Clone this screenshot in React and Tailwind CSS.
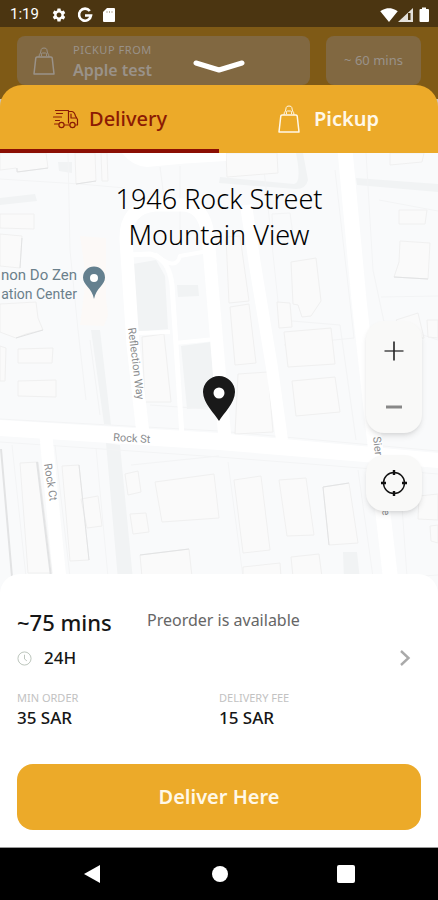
import { useState } from 'react';
import { MdSettings, MdSignalWifi4Bar } from 'react-icons/md';

const BUILDINGS = [
  '0,153 46,153 48,168 18,172 16,168 0,170',
  '75,153 95,153 96,181 76,184',
  '101,153 107,153 108,181 102,181',
  '0,214 34,214 34,229 0,228',
  '0,234 22,236 20,268 0,266',
  '0,304 36,302 38,318 43,330 26,334 16,338 0,332',
  '18,349 53,348 52,363 18,363',
  '0,346 6,348 5,381 0,381',
  '18,381 56,380 56,397 18,396',
  '164,334 142,337 145,402 171,402',
  '226,153 277,153 278,173 227,177',
  '390,153 424,153 422,162 390,165',
  '399,210 427,210 425,224 399,224',
  '400,241 430,243 428,279 394,277 399,262',
  '226,237 240,236 249,301 229,303',
  '230,307 249,304 256,363 235,365',
  '291,262 316,258 321,301 311,316 302,317 298,305 293,304',
  '277,302 290,303 292,327 279,328',
  '284,332 331,328 335,364 288,367',
  '292,381 335,377 340,412 296,416',
  '238,374 268,372 273,432 235,434',
  '396,320 418,313 424,338 412,338',
  '427,320 438,320 438,338 428,337',
  '20,463 38,462 52,573 28,573',
  '62,466 79,465 89,560 70,561',
  '81,499 98,496 102,526 87,528',
  '125,474 138,471 141,492 128,495',
  '130,514 146,513 149,532 133,534',
  '155,482 214,474 219,518 162,522',
  '140,555 189,549 192,577 142,577',
  '234,480 261,476 270,550 243,553',
  '279,480 306,478 314,535 287,536',
  '323,487 349,483 358,543 329,545',
  '291,557 319,554 322,577 293,577',
  '243,567 280,563 281,577 243,577',
  '419,496 438,494 438,520 418,519',
  '430,526 438,525 438,543 431,541',
];

const PARCEL_LINES = [
  'M0 179 L80 184 L125 188',
  'M68 153 L70 250 L78 330 L86 400',
  'M0 419 L219 431 L438 451',
  'M0 442 L219 457 L438 474',
  'M160 167 L165 205 M180 166 V234',
  'M272 214 L290 213 L293 235 L273 240 Z',
  'M263 160 L280 320 L340 325 L356 440',
  'M335 170 L354 338 L284 345',
  'M366 153 L373 270 L384 322 L438 340',
  'M379 200 L438 211 M381 297 L438 296',
  'M216 260 L229 430',
  'M12 445 L26 577 M55 445 L70 577',
  'M96 448 L108 577 M131 465 L219 456',
  'M228 462 L243 577 M358 470 L373 577',
  'M400 478 L407 577 L438 575',
  'M90 340 L100 415 M150 405 L208 409',
];

function MapDrawing() {
  return (
    <svg
      className="absolute inset-0 h-full w-full"
      viewBox="0 153 438 444"
      preserveAspectRatio="xMidYMin slice"
      aria-hidden="true"
    >
      <rect x="-400" y="153" width="1300" height="600" fill="#f9fafb" />
      {/* Paved areas */}
      <g fill="#f1f3f4">
        <path d="M133 264 L156 260 L165 276 L168 329 L138 332 Z" />
        <path d="M177 285 L198 285 L199 296 L178 297 Z" />
        <path d="M181 346 L211 342 L215 407 L187 409 Z" />
        <path d="M91 330 L100 330 L111 425 L104 424 Z" />
        <path d="M106 443 L120 445 L133 580 L118 580 Z" />
        <path d="M356 178 L438 184 V192 L357 185 Z" />
        <path d="M303 153 L308 180 Q306 189 296 189 L219 183 L220 177 L294 184 Q302 183 296 153 Z" />
        <path d="M58 162 H72 V173 L59 171 Z M0 198 L35 194 L37 201 L0 205 Z" />
        <path d="M343 552 H357 L360 580 H344 Z" />
      </g>
      <path d="M80 236 L106 238 L106 298 L108 315 L104 326 L80 325 L86 278 Z" fill="#fcf9f7" />
      <g fill="none" stroke="#f3f4f5" strokeWidth="1">
        {PARCEL_LINES.map((d) => (
          <path key={d} d={d} />
        ))}
      </g>
      <g fill="#fafafa" stroke="#f0f0f0" strokeWidth="1">
        {BUILDINGS.map((points) => (
          <polygon key={points} points={points} />
        ))}
      </g>
      <g fill="none" stroke="#e2e3e4" strokeWidth="1">
        <path d="M37 462 L51 577 M1 449 L12 577" strokeWidth="2" />
        <path d="M76 184 L96 181 M17 168 V172 L48 168 M22 238 L20 268" />
        <path d="M323 487 L349 483 M394 277 L428 279 M323 487 L329 545" />
        <path d="M140 555 L189 549 M43 330 L16 338 M79 465 L89 560" />
      </g>
      {/* Roads */}
      <g fill="none" stroke="#ffffff" strokeLinejoin="round">
        <path d="M143 434 L133 345 L126 240 Q125 208 155 205 H180 Q204 204 208 235 L217 345 L225 440" strokeWidth="13" />
        <path d="M128 255 L150 254 Q169 258 172 285 L176 345 L182 436" strokeWidth="5" />
        <path d="M155 254 Q176 272 180 256 L208 251 M138 333 L170 332 M175 343 L215 339" strokeWidth="4" />
        <path d="M246 205 L255 265 L272 368 L282 440" strokeWidth="12" />
        <path d="M345 150 L359 300 L374 436 L393 600" strokeWidth="15" />
        <path d="M46 436 L52 500 L62 600" strokeWidth="13" />
      </g>
      <path d="M122 153 Q132 166 147 167 Q184 163 226 161 V153 Z" fill="#ffffff" />
      <path d="M-400 402 L0 420 L219 433 L438 453 L900 490 V512 L438 468 L219 450 L0 436 L-400 418 Z" fill="#ffffff" />
      {/* Street names */}
      <g fill="#8b8d8f" fontFamily="Roboto, sans-serif" fontSize="11">
        <text transform="translate(113 441) rotate(3)">Rock St</text>
        <text transform="translate(128 328) rotate(83)">Reflection Way</text>
        <text transform="translate(44 464) rotate(81)">Rock Ct</text>
        <text transform="translate(373 437) rotate(83)">Sier</text>
        <text transform="translate(382 510) rotate(83)">e</text>
      </g>
      <g fill="#6b808b" fontFamily="Roboto, sans-serif" fontSize="15" textAnchor="end">
        <text x="77" y="280">non Do Zen</text>
        <text x="77" y="299" fontSize="14">ation Center</text>
      </g>
      <path d="M94 299 C92 288 83 285 83 277.500 A11 11 0 0 1 105 277.500 C105 285 96 288 94 299 Z" fill="#64808f" />
      <circle cx="94" cy="278" r="4" fill="#ffffff" />
      <path d="M219 421 C215 414 203 403 203 392 A16 16 0 0 1 235 392 C235 403 223 414 219 421 Z" fill="#191919" />
      <circle cx="219" cy="393" r="5.500" fill="#ffffff" />
    </svg>
  );
}

function BagIcon({ className }) {
  return (
    <svg className={className} viewBox="0 0 22 28" fill="none" stroke="currentColor" strokeWidth="1.500" strokeLinejoin="round">
      <path d="M4 10 H18 Q19 10 19.200 11 L21 27 H1 L2.800 11 Q3 10 4 10 Z" />
      <path d="M6 10 Q6 7 7.500 6 L8.200 2.500 Q8.500 1 11 1 Q13.500 1 13.800 2.500 L14.500 6 Q16 7 16 10" strokeWidth="1" />
      <path d="M8.500 9 Q7.500 6 9.500 6 H12.500 Q14.500 6 13.500 9" strokeWidth="1" />
    </svg>
  );
}

function TruckIcon({ className }) {
  return (
    <svg className={className} viewBox="0 0 26 20" fill="none" stroke="currentColor" strokeWidth="1.2" strokeLinecap="round" strokeLinejoin="round">
      <path d="M3 1.500 H16 V14 M12 16 H17" />
      <path d="M16 2.500 H19.500 Q22 3 23 7 L25 10.500 V16 H23" />
      <path d="M18.500 5 V9 H23.500" />
      <path d="M4 4.500 H10 M1 8 H9 M3 11.500 H7 M2 15 H6" />
      <circle cx="9" cy="16" r="2.600" />
      <circle cx="20" cy="16" r="2.600" />
    </svg>
  );
}

function StatusBar() {
  return (
    <div className="flex h-[27px] items-center justify-between bg-[#4b3511] pt-0.5 pr-2 pl-2.5 text-white">
      <div className="flex items-center">
        <span className="font-[Roboto,sans-serif] text-[15px]">1:19</span>
        <MdSettings className="ml-3 size-4" />
        <svg className="ml-2.5 size-4" viewBox="0 0 16 16" fill="none" stroke="currentColor" strokeWidth="2.600">
          <path d="M12.800 4 A6 6 0 1 0 14 8.500 H8" />
        </svg>
        <svg className="ml-2.5 h-4 w-3" viewBox="0 0 12 16" fill="currentColor">
          <path d="M4 1 H11 Q12 1 12 2 V14 Q12 15 11 15 H1 Q0 15 0 14 V5 Z" />
          <path d="M4 4 V6 M6.500 4 V6 M9 4 V6" stroke="#b9b09f" />
        </svg>
      </div>
      <div className="flex items-center">
        <MdSignalWifi4Bar className="size-[18px]" />
        <svg className="h-4 w-[32px]" viewBox="0 0 32 16" fill="currentColor">
          <path d="M0 15 L15 1 V15 Z" opacity="0.85" />
          <path d="M10 6 H12.500 V13 H10 Z" fill="#4b3511" />
          <path d="M24 0.500 H28 V2 H30 Q31 2 31 3 V14 Q31 15 30 15 H22.500 Q21.500 15 21.500 14 V3 Q21.500 2 22.500 2 H24 Z" />
        </svg>
      </div>
    </div>
  );
}

function Header() {
  return (
    <header className="relative flex h-[72px] items-start gap-4 bg-[#7f5a16] px-[17px] pt-[9px] text-[#9a9289]">
      <div className="flex h-[49px] flex-1 items-center rounded-lg bg-[#816841] pl-4">
        <BagIcon className="h-7 w-[22px]" />
        <div className="ml-[18px] flex flex-col pt-0.5">
          <span className="text-[11px] leading-4 tracking-wider">PICKUP FROM</span>
          <span className="text-base leading-6 font-semibold">Apple test</span>
        </div>
      </div>
      <div className="flex h-[49px] w-[95px] items-center justify-center rounded-lg bg-[#816841] text-[13px]">
        ~ 60 mins
      </div>
      <button type="button" aria-label="Close" className="absolute top-8 left-1/2 -translate-x-1/2">
        <svg className="h-4 w-[52px]" viewBox="0 0 52 16" fill="none" stroke="#ffffff" strokeWidth="5" strokeLinecap="round" strokeLinejoin="round">
          <path d="M3 4 L26 11 L49 4" />
        </svg>
      </button>
    </header>
  );
}

function Tabs({ mode, onChange }) {
  return (
    <div role="tablist" className="flex h-[68px] bg-[#ecaa29] text-xl">
      <button
        type="button"
        role="tab"
        aria-selected={mode === 'delivery'}
        onClick={() => onChange('delivery')}
        className={`flex flex-1 items-center justify-center gap-2.5 border-b-4 pt-1 font-medium ${
          mode === 'delivery' ? 'border-[#8b0f04] text-[#8b1a04]' : 'border-transparent text-white'
        }`}
      >
        <TruckIcon className="h-5 w-[27px]" />
        Delivery
      </button>
      <button
        type="button"
        role="tab"
        aria-selected={mode === 'pickup'}
        onClick={() => onChange('pickup')}
        className={`flex flex-1 items-center justify-center gap-3.5 border-b-4 pt-1 font-semibold ${
          mode === 'pickup' ? 'border-[#8b0f04] text-[#8b1a04]' : 'border-transparent text-[#fff8e8]'
        }`}
      >
        <BagIcon className="h-7 w-[22px]" />
        Pickup
      </button>
    </div>
  );
}

function MapControls() {
  return (
    <div className="absolute top-[168px] right-4 flex flex-col gap-[22px]">
      <div className="flex flex-col rounded-[18px] bg-[#f9f9f8] shadow-md">
        <button type="button" aria-label="Zoom in" className="flex h-14 w-14 items-center justify-center pt-1">
          <svg className="size-5" viewBox="0 0 20 20" fill="none" strokeWidth="1.600">
            <path d="M0.500 10 H19.500" stroke="#555555" />
            <path d="M10 0.500 V19.500" stroke="#222222" />
          </svg>
        </button>
        <button type="button" aria-label="Zoom out" className="flex h-14 w-14 items-center justify-center pt-1">
          <svg className="size-4" viewBox="0 0 16 16" fill="none">
            <path d="M0 8 H16" stroke="#888888" strokeWidth="3" />
          </svg>
        </button>
      </div>
      <button type="button" aria-label="My location" className="flex h-14 w-14 items-center justify-center rounded-[18px] bg-[#f9f9f8] shadow-md">
        <svg className="size-7" viewBox="0 0 28 28" fill="none" stroke="#111111">
          <circle cx="14" cy="14" r="10.500" strokeWidth="1.400" />
          <path d="M14 1 V6 M14 22 V27 M1 14 H6 M22 14 H27" strokeWidth="2.400" />
        </svg>
      </button>
    </div>
  );
}

function DeliveryDetails() {
  return (
    <section className="relative -mt-5 rounded-t-[20px] bg-white px-[17px] pt-[34px] pb-[17px] text-[#161616]">
      <div className="flex items-start">
        <span className="w-[130px] text-[22px] leading-7 font-medium">~75 mins</span>
        <span className="text-base leading-6 text-[#666666]">Preorder is available</span>
      </div>
      <button type="button" aria-label="Opening hours" className="mt-2.5 flex w-full items-center justify-between pr-2.5">
        <span className="flex items-center gap-3 text-[17px] leading-6 font-medium">
          <svg className="size-[15px]" viewBox="0 0 16 16" fill="none" stroke="#b9c2b9" strokeWidth="1">
            <circle cx="8" cy="8" r="7" />
            <path d="M8 4 V8.500 L10.500 10.500" />
          </svg>
          24H
        </span>
        <svg className="h-4 w-3" viewBox="0 0 12 16" fill="none" stroke="#aaaaaa" strokeWidth="2.400">
          <path d="M2 1 L9.500 8 L2 15" />
        </svg>
      </button>
      <dl className="mt-5 grid grid-cols-2">
        <div>
          <dt className="text-[11px] leading-4 text-[#c2c2c2]">MIN ORDER</dt>
          <dd className="text-[17px] leading-6 font-medium">35 SAR</dd>
        </div>
        <div>
          <dt className="text-[11px] leading-4 text-[#c2c2c2]">DELIVERY FEE</dt>
          <dd className="text-[17px] leading-6 font-medium">15 SAR</dd>
        </div>
      </dl>
      <button type="button" className="mt-[34px] h-[66px] w-full rounded-2xl bg-[#ecaa29] text-xl font-semibold text-[#fff8e8]">
        Deliver Here
      </button>
    </section>
  );
}

function SystemNav() {
  return (
    <nav className="flex h-[53px] items-center justify-around border-t border-[#999999] bg-black px-7 text-white">
      <button type="button" aria-label="Back">
        <svg className="size-5" viewBox="0 0 20 20" fill="currentColor">
          <path d="M1 10 L17 1 V19 Z" />
        </svg>
      </button>
      <button type="button" aria-label="Home" className="size-4 rounded-full bg-white" />
      <button type="button" aria-label="Recent apps" className="size-[18px] rounded-xs bg-white" />
    </nav>
  );
}

export default function App() {
  const [mode, setMode] = useState('delivery');

  return (
    <div className="flex min-h-screen flex-col bg-[#c9c4bb] font-['Noto_Sans','Open_Sans',sans-serif]">
      <StatusBar />
      <Header />
      <main className="relative -mt-3.5 flex flex-1 flex-col overflow-hidden rounded-t-[22px]">
        <Tabs mode={mode} onChange={setMode} />
        <div className="relative flex-1 overflow-hidden">
          <MapDrawing />
          <h1 className="relative mx-auto mt-7 w-60 text-center text-[27px] leading-9 font-light text-black">
            1946 Rock Street Mountain View
          </h1>
          <MapControls />
        </div>
        <DeliveryDetails />
      </main>
      <SystemNav />
    </div>
  );
}
